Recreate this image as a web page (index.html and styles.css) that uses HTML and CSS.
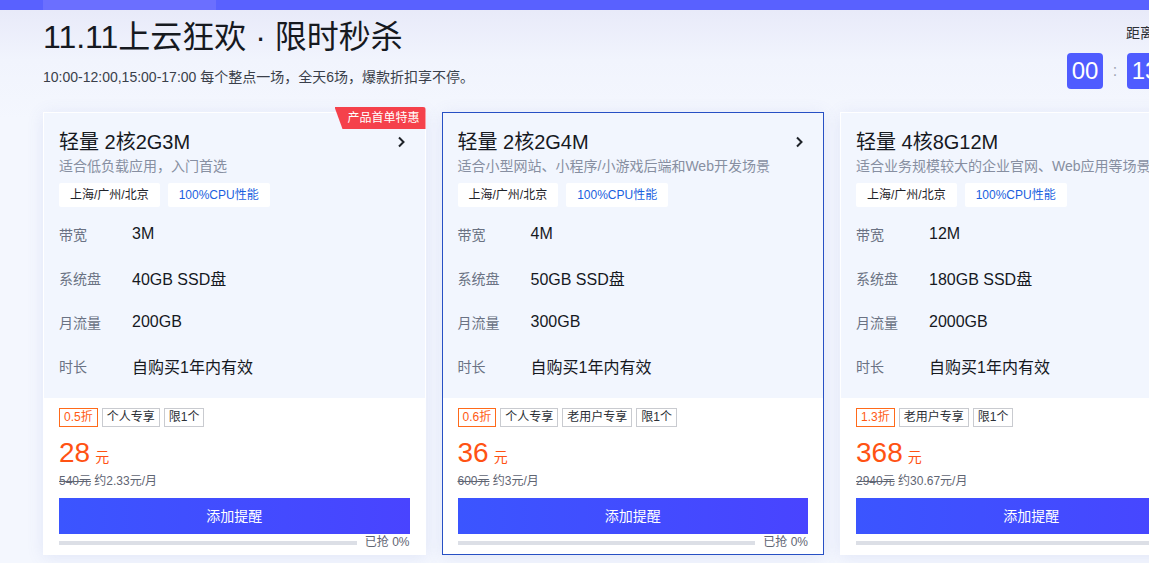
FILE: index.html
```html
<!DOCTYPE html>
<html lang="zh-CN">
<head>
<meta charset="utf-8">
<title>11.11上云狂欢 · 限时秒杀</title>
<link rel="stylesheet" href="styles.css">
</head>
<body>
<div class="topbar"><div class="topbar-seg"></div></div>
<div class="page">
  <div class="header">
    <div class="title-block">
      <h1 class="title">11.11上云狂欢 · 限时秒杀</h1>
      <p class="subtitle">10:00-12:00,15:00-17:00 每个整点一场，全天6场，爆款折扣享不停。</p>
    </div>
    <div class="countdown">
      <div class="cd-label">距离下一场开始</div>
      <div class="cd-row">
        <span class="cd-box">00</span><span class="cd-colon">:</span>
        <span class="cd-box">13</span><span class="cd-colon">:</span>
        <span class="cd-box">42</span><span class="cd-colon">:</span>
        <span class="cd-box">08</span>
      </div>
    </div>
  </div>

  <div class="cards">
    <div class="card">
      <div class="ribbon">产品首单特惠</div>
      <div class="card-top">
        <div class="card-head">
          <span class="card-title">轻量 2核2G3M</span>
          <svg class="chev" width="10" height="12" viewBox="0 0 10 12"><path d="M3 1.5 L7.5 6 L3 10.5" fill="none" stroke="#1f2329" stroke-width="2"/></svg>
        </div>
        <div class="card-desc">适合低负载应用，入门首选</div>
        <div class="feat-tags"><span class="feat">上海/广州/北京</span><span class="feat feat-blue">100%CPU性能</span></div>
        <div class="specs">
          <div class="spec"><span class="spec-k">带宽</span><span class="spec-v">3M</span></div>
          <div class="spec"><span class="spec-k">系统盘</span><span class="spec-v">40GB SSD盘</span></div>
          <div class="spec"><span class="spec-k">月流量</span><span class="spec-v">200GB</span></div>
          <div class="spec"><span class="spec-k">时长</span><span class="spec-v">自购买1年内有效</span></div>
        </div>
      </div>
      <div class="card-bottom">
        <div class="ptags"><span class="ptag ptag-off">0.5折</span><span class="ptag">个人专享</span><span class="ptag">限1个</span></div>
        <div class="price"><span class="price-num">28</span><span class="price-unit">元</span></div>
        <div class="price-sub"><s>540元</s> 约2.33元/月</div>
        <button class="btn">添加提醒</button>
        <div class="progress"><div class="bar"></div><span class="sold">已抢 0%</span></div>
      </div>
    </div>

    <div class="card card-active">
      <div class="card-top">
        <div class="card-head">
          <span class="card-title">轻量 2核2G4M</span>
          <svg class="chev" width="10" height="12" viewBox="0 0 10 12"><path d="M3 1.5 L7.5 6 L3 10.5" fill="none" stroke="#1f2329" stroke-width="2"/></svg>
        </div>
        <div class="card-desc">适合小型网站、小程序/小游戏后端和Web开发场景</div>
        <div class="feat-tags"><span class="feat">上海/广州/北京</span><span class="feat feat-blue">100%CPU性能</span></div>
        <div class="specs">
          <div class="spec"><span class="spec-k">带宽</span><span class="spec-v">4M</span></div>
          <div class="spec"><span class="spec-k">系统盘</span><span class="spec-v">50GB SSD盘</span></div>
          <div class="spec"><span class="spec-k">月流量</span><span class="spec-v">300GB</span></div>
          <div class="spec"><span class="spec-k">时长</span><span class="spec-v">自购买1年内有效</span></div>
        </div>
      </div>
      <div class="card-bottom">
        <div class="ptags"><span class="ptag ptag-off">0.6折</span><span class="ptag">个人专享</span><span class="ptag">老用户专享</span><span class="ptag">限1个</span></div>
        <div class="price"><span class="price-num">36</span><span class="price-unit">元</span></div>
        <div class="price-sub"><s>600元</s> 约3元/月</div>
        <button class="btn">添加提醒</button>
        <div class="progress"><div class="bar"></div><span class="sold">已抢 0%</span></div>
      </div>
    </div>

    <div class="card">
      <div class="card-top">
        <div class="card-head">
          <span class="card-title">轻量 4核8G12M</span>
          <svg class="chev" width="10" height="12" viewBox="0 0 10 12"><path d="M3 1.5 L7.5 6 L3 10.5" fill="none" stroke="#1f2329" stroke-width="2"/></svg>
        </div>
        <div class="card-desc">适合业务规模较大的企业官网、Web应用等场景</div>
        <div class="feat-tags"><span class="feat">上海/广州/北京</span><span class="feat feat-blue">100%CPU性能</span></div>
        <div class="specs">
          <div class="spec"><span class="spec-k">带宽</span><span class="spec-v">12M</span></div>
          <div class="spec"><span class="spec-k">系统盘</span><span class="spec-v">180GB SSD盘</span></div>
          <div class="spec"><span class="spec-k">月流量</span><span class="spec-v">2000GB</span></div>
          <div class="spec"><span class="spec-k">时长</span><span class="spec-v">自购买1年内有效</span></div>
        </div>
      </div>
      <div class="card-bottom">
        <div class="ptags"><span class="ptag ptag-off">1.3折</span><span class="ptag">老用户专享</span><span class="ptag">限1个</span></div>
        <div class="price"><span class="price-num">368</span><span class="price-unit">元</span></div>
        <div class="price-sub"><s>2940元</s> 约30.67元/月</div>
        <button class="btn">添加提醒</button>
        <div class="progress"><div class="bar"></div><span class="sold">已抢 0%</span></div>
      </div>
    </div>
  </div>
</div>
</body>
</html>
```
FILE: styles.css
```css
* { box-sizing: border-box; }
html, body { margin: 0; padding: 0; }
body {
  width: 1149px;
  height: 563px;
  overflow: hidden;
  font-family: "Liberation Sans", "Noto Sans CJK SC", sans-serif;
  color: #1f2329;
  background: linear-gradient(180deg, #e8eaf9 10px, #f1f4fd 60px, #f4f7fe 120px);
}
.topbar {
  height: 10px;
  background: #5961ff;
  padding-left: 43px;
}
.topbar-seg {
  width: 173px;
  height: 10px;
  background: #6b6fff;
}
.page {
  width: 1240px;
  padding-left: 43px;
  box-sizing: content-box;
}
.header {
  display: flex;
  justify-content: space-between;
  align-items: flex-start;
}
.title-block { padding-top: 7px; }
.title {
  margin: 0;
  font-size: 32px;
  line-height: 40px;
  font-weight: 400;
  color: #16191f;
}
.subtitle {
  margin: 10px 0 0;
  font-size: 14px;
  line-height: 20px;
  color: #3a3f4a;
}
.countdown {
  width: 216px;
  padding-top: 13px;
}
.cd-label {
  font-size: 14px;
  line-height: 20px;
  text-align: center;
  color: #2b2f36;
}
.cd-row {
  display: flex;
  margin-top: 10px;
}
.cd-box {
  width: 36px;
  height: 36px;
  border-radius: 4px;
  background: #4f5cff;
  color: #fff;
  font-size: 24px;
  line-height: 36px;
  text-align: center;
}
.cd-colon {
  width: 24px;
  text-align: center;
  color: #a0a6b4;
  font-size: 16px;
  line-height: 36px;
}
.cards {
  display: flex;
  gap: 16px;
  margin-top: 23px;
}
.card {
  position: relative;
  flex: 0 0 382.5px;
  width: 382.5px;
  height: 443px;
  background: #fff;
  border: 1px solid #fff;
  box-shadow: 0 2px 16px rgba(90, 105, 200, 0.12);
}
.card-active { border-color: #2750c4; }
.ribbon {
  position: absolute;
  top: -6px;
  right: -1px;
  width: 91px;
  height: 22px;
  padding-left: 13px;
  font-size: 12px;
  line-height: 22px;
  color: #fff;
  background: #f5414b;
  border-top-right-radius: 3px;
  clip-path: polygon(0 0, 100% 0, 100% 100%, 8px 100%);
}
.card-top {
  background: #f2f6fe;
  padding: 17px 15px 8px;
  height: 285px;
}
.card-head {
  display: flex;
  justify-content: space-between;
  align-items: center;
  height: 24px;
}
.card-title {
  font-size: 20px;
  line-height: 24px;
  color: #16191f;
}
.chev { margin-right: 4px; }
.card-desc {
  margin-top: 2px;
  font-size: 14px;
  line-height: 20px;
  color: #878fa1;
  white-space: nowrap;
}
.feat-tags {
  display: flex;
  gap: 8px;
  margin-top: 7px;
}
.feat {
  height: 24px;
  padding: 0 11px;
  background: #fff;
  border-radius: 2px;
  font-size: 12px;
  line-height: 24px;
  color: #1f2329;
}
.feat-blue { color: #1a5fe0; }
.specs { margin-top: 5px; }
.spec {
  display: flex;
  align-items: center;
  height: 44px;
}
.spec-k {
  width: 73px;
  font-size: 14px;
  color: #6a7283;
}
.spec-v {
  font-size: 16px;
  color: #16191f;
}
.card-bottom {
  padding: 10px 15px 0;
}
.ptags {
  display: flex;
  gap: 4px;
}
.ptag {
  height: 19px;
  padding: 0 4px;
  border: 1px solid #c9cbd0;
  font-size: 12px;
  line-height: 17px;
  color: #2b2f36;
}
.ptag-off {
  border-color: #ff6a1a;
  color: #ff5a12;
}
.price {
  margin-top: 9px;
  height: 34px;
  line-height: 34px;
  color: #ff5213;
}
.price-num { font-size: 28px; }
.price-unit { font-size: 14px; margin-left: 5px; }
.price-sub {
  margin-top: 2px;
  font-size: 12px;
  line-height: 18px;
  color: #5f6573;
}
.price-sub s { color: #5f6573; }
.btn {
  display: block;
  width: 100%;
  height: 36px;
  margin-top: 8px;
  border: 0;
  padding: 0;
  background: linear-gradient(90deg, #3b55ff, #4944ff);
  color: #fff;
  font-family: "Liberation Sans", "Noto Sans CJK SC", sans-serif;
  font-size: 14px;
  line-height: 36px;
}
.progress {
  display: flex;
  align-items: center;
  gap: 8px;
  height: 16px;
}
.bar {
  flex: 1;
  height: 4px;
  margin-top: 2px;
  background: #dcdfe6;
}
.sold {
  font-size: 12px;
  line-height: 16px;
  color: #5f6573;
  white-space: nowrap;
}
```
